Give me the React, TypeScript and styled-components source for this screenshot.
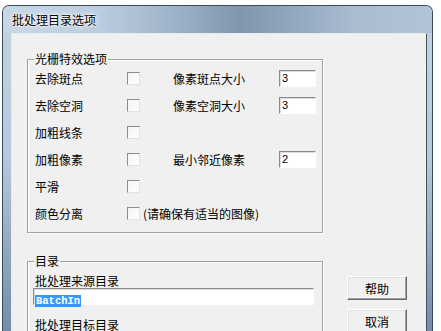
import React from 'react';
import styled, { createGlobalStyle } from 'styled-components';

const GlobalStyle = createGlobalStyle`
  html, body {
    margin: 0;
    padding: 0;
    background: #fff;
    overflow: hidden;
  }
  body {
    font-family: "Noto Sans CJK SC", "Liberation Sans", sans-serif;
    font-size: 12px;
    color: #000;
  }
`;

const Window = styled.div`
  box-sizing: border-box;
  margin: 5px 0 0 2px;
  width: 431px;
  height: 340px;
  border: 1px solid #3a4a5c;
  border-bottom: none;
  border-radius: 7px 7px 0 0;
  overflow: hidden;
  display: flex;
  flex-direction: column;
  background: linear-gradient(180deg, #c3d3e3 0%, #b6c8da 45%, #8ea4bc 75%, #6f88a4 100%);
`;

const TitleBar = styled.div`
  height: 27px;
  flex: none;
  padding-left: 9px;
  line-height: 27px;
  font-size: 12px;
  background: linear-gradient(
    90deg,
    #c8d7e6 0%,
    #bccde0 22%,
    #9fb3c8 40%,
    #8196ae 55%,
    #93a8be 68%,
    #aabcd0 82%,
    #b2c4d6 100%
  );
  text-shadow: 0 0 6px #fff, 0 0 3px #fff, 0 0 2px #fff;
`;

const Body = styled.div`
  flex: 1;
  display: flex;
  padding: 0 5px 0 8px;
`;

const Client = styled.div`
  flex: 1;
  box-sizing: border-box;
  background: #f0f0f0;
  border: 1px solid;
  border-color: #e4ecf3 #44515f #44515f #e4ecf3;
  padding: 18px 0 0 15px;
`;

const Group = styled.fieldset`
  box-sizing: border-box;
  width: 296px;
  margin: 0;
  padding: 0;
  border: 1px solid #a0a0a0;
  box-shadow: 1px 1px 0 #fff, inset 1px 1px 0 #fff;
`;

const Caption = styled.legend`
  margin-left: 6px;
  padding: 0 1px;
  line-height: 14px;
  font-size: 12px;
`;

const EffectGrid = styled.div`
  display: grid;
  grid-template-columns: 92px 46px 106px 37px;
  grid-auto-rows: 27px;
  align-items: center;
  margin-top: -1px;
  padding: 0 0 5px 7px;
`;

const Label = styled.span`
  line-height: 14px;
  white-space: nowrap;
`;

const Check = styled.span`
  box-sizing: border-box;
  display: block;
  width: 13px;
  height: 13px;
  border: 1px solid;
  border-color: #8d8d8d #e2e2e2 #e2e2e2 #8d8d8d;
  background: linear-gradient(135deg, #f4f4f4, #ffffff);
`;

const CheckWithNote = styled.div`
  grid-column: 2 / -1;
  display: flex;
  align-items: center;
  gap: 3px;
`;

const NumberBox = styled.div`
  box-sizing: border-box;
  width: 37px;
  height: 17px;
  border: 1px solid;
  border-color: #8a8a8a #ffffff #ffffff #8a8a8a;
  box-shadow: inset 1px 1px 0 #dcdcdc;
  background: #fff;
  padding-left: 2px;
  font-family: "Liberation Sans", Arial, sans-serif;
  font-size: 11px;
  line-height: 15px;
`;

const LowerRow = styled.div`
  display: flex;
  align-items: flex-start;
  margin-top: 21px;
`;

const DirBody = styled.div`
  padding: 6px 0 0 0;
`;

const DirLabel = styled.div<{ $gap?: number }>`
  line-height: 14px;
  padding-left: 7px;
  margin-top: ${p => p.$gap ?? 0}px;
`;

const PathBox = styled.div`
  box-sizing: border-box;
  margin-left: 5px;
  width: 281px;
  height: 17px;
  border: 1px solid;
  border-color: #8a8a8a #ffffff #ffffff #8a8a8a;
  box-shadow: inset 1px 1px 0 #dcdcdc;
  background: #fff;
  padding: 1px 0 0 1px;
`;

const Selected = styled.span`
  display: inline-block;
  background: #3399ff;
  color: #fff;
  font-family: "Liberation Mono", "Courier New", monospace;
  font-weight: bold;
  font-size: 10.5px;
  line-height: 12px;
  padding: 0 1px;
`;

const ButtonColumn = styled.div`
  display: flex;
  flex-direction: column;
  gap: 9px;
  margin-left: 24px;
  padding-top: 22px;
`;

const Button = styled.button`
  box-sizing: border-box;
  width: 60px;
  height: 24px;
  padding: 0;
  background: #f0f0f0;
  border: 1px solid;
  border-color: #ffffff #696969 #696969 #ffffff;
  box-shadow: inset -1px -1px 0 #a0a0a0, inset 1px 1px 0 #e3e3e3;
  font-family: "Noto Sans CJK SC", sans-serif;
  font-size: 12px;
  color: #000;
`;

type Effect = { name: string; size?: string; value?: string };

const effects: Effect[] = [
  { name: '去除斑点', size: '像素斑点大小', value: '3' },
  { name: '去除空洞', size: '像素空洞大小', value: '3' },
  { name: '加粗线条' },
  { name: '加粗像素', size: '最小邻近像素', value: '2' },
  { name: '平滑' },
];

export default function App() {
  return (
    <>
      <GlobalStyle />
      <Window>
        <TitleBar>批处理目录选项</TitleBar>
        <Body>
          <Client>
            <Group>
              <Caption>光栅特效选项</Caption>
              <EffectGrid>
                {effects.map(e => (
                  <React.Fragment key={e.name}>
                    <Label>{e.name}</Label>
                    <Check />
                    {e.size ? <Label>{e.size}</Label> : <span />}
                    {e.value ? <NumberBox>{e.value}</NumberBox> : <span />}
                  </React.Fragment>
                ))}
                <Label>颜色分离</Label>
                <CheckWithNote>
                  <Check />
                  <Label>(请确保有适当的图像)</Label>
                </CheckWithNote>
              </EffectGrid>
            </Group>
            <LowerRow>
              <Group>
                <Caption>目录</Caption>
                <DirBody>
                  <DirLabel>批处理来源目录</DirLabel>
                  <PathBox>
                    <Selected>BatchIn</Selected>
                  </PathBox>
                  <DirLabel $gap={13}>批处理目标目录</DirLabel>
                  <PathBox />
                </DirBody>
              </Group>
              <ButtonColumn>
                <Button>帮助</Button>
                <Button>取消</Button>
              </ButtonColumn>
            </LowerRow>
          </Client>
        </Body>
      </Window>
    </>
  );
}
